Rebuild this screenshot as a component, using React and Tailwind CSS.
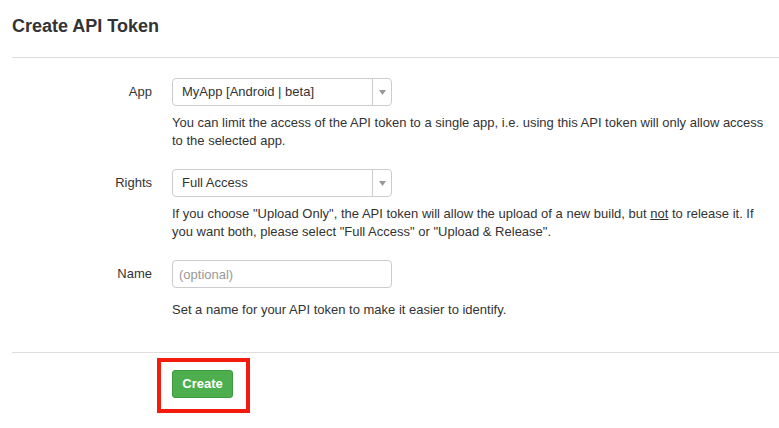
const SelectBox = ({ value }) => (
  <div className="flex h-[28px] w-[220px] items-stretch rounded-[4px] border border-[#ccc] bg-white">
    <div className="flex flex-1 items-center pl-[9px] text-[13px] text-[#333]">{value}</div>
    <div className="flex w-[19px] items-center justify-center border-l border-[#ccc]">
      <svg width="7" height="5" viewBox="0 0 7 5">
        <path d="M0 0 H7 L3.5 5 Z" fill="#999" />
      </svg>
    </div>
  </div>
);

const Help = ({ children, className = "mt-2" }) => (
  <p className={`text-[13px] leading-[18px] text-[#333] ${className}`}>{children}</p>
);

const Row = ({ label, children, className = "" }) => (
  <div className={`grid grid-cols-[140px_1fr] gap-x-5 ${className}`}>
    <div className="flex h-[28px] items-center justify-end text-[13px] text-[#333]">{label}</div>
    <div>{children}</div>
  </div>
);

export default function App() {
  return (
    <div
      className="min-h-screen bg-white pl-3 text-[#333]"
      style={{ fontFamily: '"Liberation Sans", Arial, sans-serif' }}
    >
      <h3 className="pt-4 text-[18px] font-bold leading-[20px]">Create API Token</h3>
      <hr className="mt-[21px] border-t border-[#ddd]" />

      <Row label="App" className="mt-5">
        <SelectBox value="MyApp [Android | beta]" />
        <Help>
          You can limit the access of the API token to a single app, i.e. using this API token will only allow access
          <br />
          to the selected app.
        </Help>
      </Row>

      <Row label="Rights" className="mt-[19px]">
        <SelectBox value="Full Access" />
        <Help>
          If you choose "Upload Only", the API token will allow the upload of a new build, but <u>not</u> to release it. If
          <br />
          you want both, please select "Full Access" or "Upload &amp; Release".
        </Help>
      </Row>

      <Row label="Name" className="mt-[19px]">
        <input
          className="h-[28px] w-[220px] rounded-[4px] border border-[#ccc] px-[6px] text-[13px] text-[#333] placeholder:text-[#999] outline-none"
          placeholder="(optional)"
        />
        <Help className="mt-[13px]">Set a name for your API token to make it easier to identify.</Help>
      </Row>

      <hr className="mt-[33px] border-t border-[#ddd]" />

      <div className="ml-[145px] mt-[5px] inline-block border-4 border-[#f21b0d] pb-[11px] pl-[11px] pr-[13px] pt-2">
        <button className="h-[28px] w-[61px] rounded-[3px] border border-[#3e9a3e] bg-[#4cae4c] text-[13px] font-bold text-white">
          Create
        </button>
      </div>
    </div>
  );
}
